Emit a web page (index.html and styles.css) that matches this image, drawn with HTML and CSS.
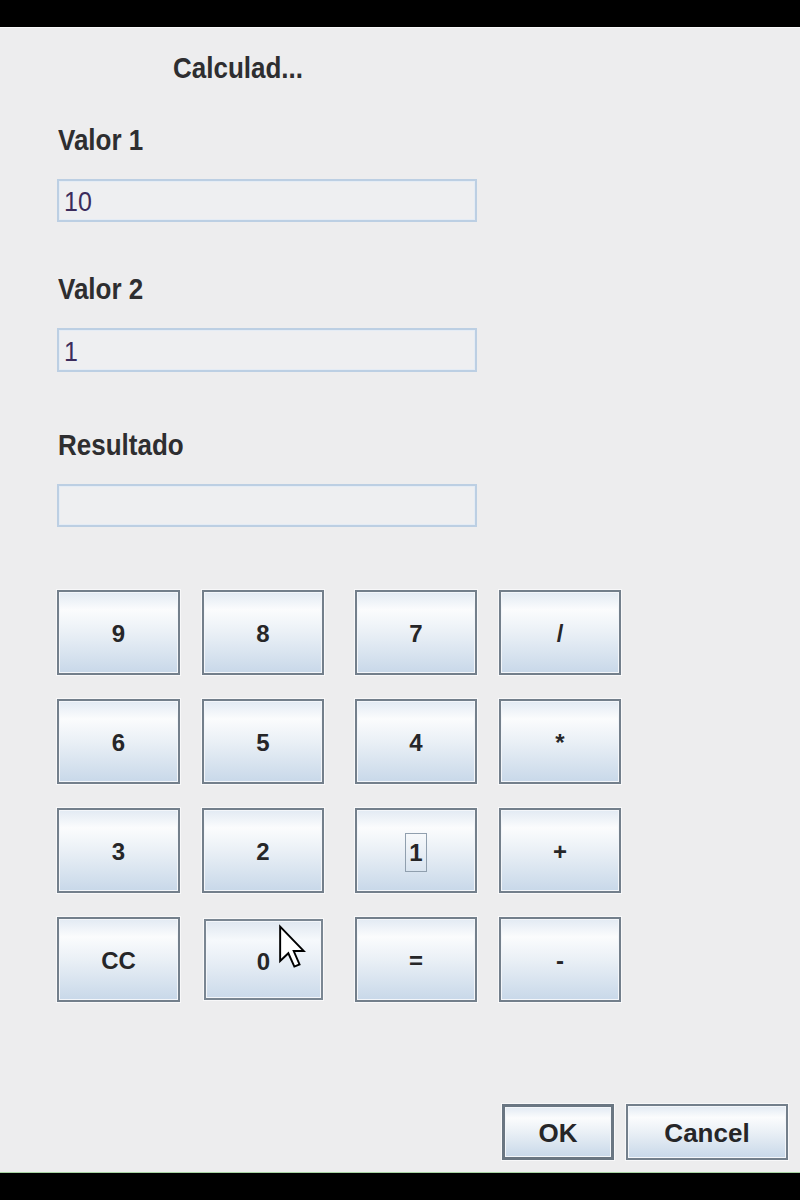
FILE: index.html
```html
<!DOCTYPE html>
<html lang="es">
<head>
<meta charset="utf-8">
<title>Calculadora</title>
<link rel="stylesheet" href="styles.css">
</head>
<body>
<div class="screen">
  <div class="topbar"></div>
  <div class="dialog">
    <div class="title">Calculad...</div>

    <div class="label label-first">Valor 1</div>
    <div class="field"><span class="value">10</span></div>

    <div class="label label-second">Valor 2</div>
    <div class="field field-tall"><span class="value">1</span></div>

    <div class="label label-third">Resultado</div>
    <div class="field"></div>

    <div class="keypad">
      <button class="key">9</button>
      <button class="key">8</button>
      <button class="key">7</button>
      <button class="key">/</button>
      <button class="key">6</button>
      <button class="key">5</button>
      <button class="key">4</button>
      <button class="key">*</button>
      <button class="key">3</button>
      <button class="key">2</button>
      <button class="key"><span class="focus">1</span></button>
      <button class="key">+</button>
      <button class="key">CC</button>
      <button class="key key-pressed">0
        <svg class="cursor" width="28" height="46" viewBox="0 0 13 21">
          <path d="M1 1 L1 17 L4.8 13.4 L7.6 19.6 L10 18.6 L7.3 12.4 L12 12.4 Z" fill="#ffffff" stroke="#000000" stroke-width="0.9" stroke-linejoin="miter"/>
        </svg>
      </button>
      <button class="key">=</button>
      <button class="key">-</button>
    </div>

    <div class="actions">
      <button class="btn btn-default">OK</button>
      <button class="btn btn-cancel">Cancel</button>
    </div>
  </div>
  <div class="bottombar"></div>
</div>
</body>
</html>
```

FILE: styles.css
```css
html, body {
  margin: 0;
  padding: 0;
  background: #000000;
}

.screen {
  width: 800px;
  height: 1200px;
  display: flex;
  flex-direction: column;
  background: #ededee;
  font-family: "Liberation Sans", Arial, sans-serif;
  color: #2e2e30;
}

.topbar {
  height: 27px;
  background: #000000;
  border-bottom: 1px solid #fafafa;
  flex: none;
}

.dialog {
  flex: 1;
  display: flex;
  flex-direction: column;
  padding: 25px 12px 0 57px;
}

.title {
  font-size: 26px;
  font-weight: bold;
  line-height: 30px;
  padding-left: 116px;
  transform: scaleY(1.1);
  transform-origin: left 60%;
}

.label {
  font-size: 26px;
  font-weight: bold;
  line-height: 30px;
  padding-left: 1px;
  transform: scaleY(1.1);
  transform-origin: left 60%;
}

.label-first { margin-top: 42px; }
.label-second { margin-top: 52px; }
.label-third { margin-top: 58px; }

.field {
  box-sizing: border-box;
  width: 420px;
  height: 43px;
  margin-top: 24px;
  border: 2px solid #bccfe3;
  box-shadow: inset 0 0 0 1px #e4ecf5;
  background: #eeeff1;
  display: flex;
  align-items: center;
  padding-left: 5px;
  padding-top: 2px;
}

.field-tall { height: 44px; }

.value {
  font-size: 25px;
  color: #3b2c5c;
  line-height: 1;
  display: inline-block;
  transform: scaleY(1.12);
}

.keypad {
  margin-top: 63px;
  display: grid;
  grid-template-columns: 123px 122px 131px 122px;
  grid-auto-rows: 85px;
  column-gap: 22px;
  row-gap: 24px;
}

.key,
.btn {
  box-sizing: border-box;
  font-family: "Liberation Sans", Arial, sans-serif;
  font-weight: bold;
  color: #262628;
  border: 2px solid #737f8b;
  box-shadow: inset 0 0 0 1px #f3f6fa, 0 0 0 1px #f8f8f9;
  background: linear-gradient(#e2eaf3 0%, #fbfcfd 22%, #eaf0f6 50%, #c8d8e9 100%);
  padding: 0;
  margin: 0;
  display: flex;
  align-items: center;
  justify-content: center;
}

.key {
  font-size: 24px;
  width: 100%;
  height: 85px;
  position: relative;
  padding-top: 3px;
}

.key:nth-child(4n+3) {
  width: 122px;
  justify-self: end;
}

.key-pressed {
  width: 119px;
  height: 81px;
  margin: 2px 0 0 2px;
  border-color: #7a8692;
  padding-top: 5px;
  background: linear-gradient(#dfe7f0 0%, #f6f9fc 25%, #e6edf5 55%, #cbdaea 100%);
}

.focus {
  display: inline-block;
  border: 1px solid #909fae;
  padding: 7px 3px 6px;
  line-height: 24px;
}

.cursor {
  position: absolute;
  left: 72px;
  top: 3px;
}

.actions {
  margin-top: 102px;
  display: flex;
  justify-content: flex-end;
  gap: 12px;
}

.btn {
  font-size: 26px;
  height: 56px;
  padding-top: 2px;
}

.btn-default {
  width: 112px;
  border-width: 3px;
  border-color: #6a7682;
}

.btn-cancel {
  width: 162px;
}

.bottombar {
  flex: none;
  height: 28px;
  background: #000000;
  border-top: 1px solid #a7d3a2;
  box-sizing: border-box;
}
```
